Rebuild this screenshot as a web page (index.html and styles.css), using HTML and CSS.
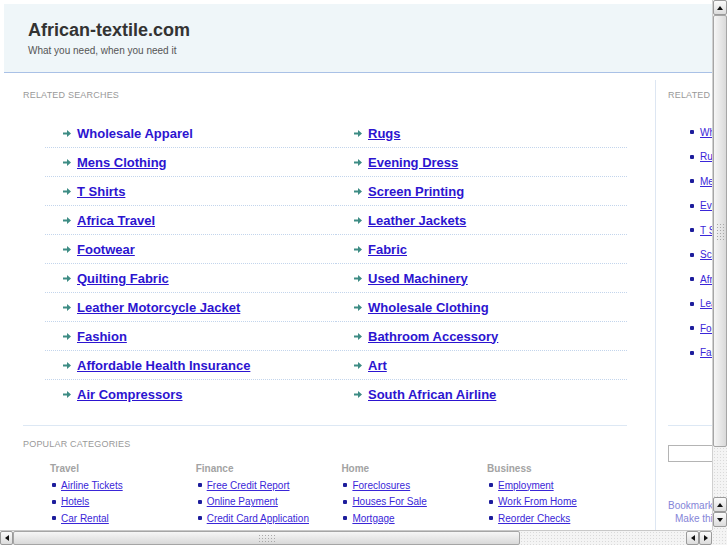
FILE: index.html
```html
<html>
  <head>
    <link rel="stylesheet" href="styles.css">
  </head>
  <body>
    <div class="screen">
      <div class="viewport">
        <div class="page">
          <div class="header">
            <h1 class="title">African-textile.com</h1>
            <p class="tagline">What you need, when you need it</p>
          </div>

          <div class="content">
            <!-- main column -->
            <div class="main">
              <h2 class="label">Related Searches</h2>
              <ul class="searches">
                <li><a class="plain" href="#">Wholesale Apparel</a></li>
                <li><a href="#">Rugs</a></li>
                <li><a href="#">Mens Clothing</a></li>
                <li><a href="#">Evening Dress</a></li>
                <li><a href="#">T Shirts</a></li>
                <li><a href="#">Screen Printing</a></li>
                <li><a href="#">Africa Travel</a></li>
                <li><a href="#">Leather Jackets</a></li>
                <li><a href="#">Footwear</a></li>
                <li><a href="#">Fabric</a></li>
                <li><a href="#">Quilting Fabric</a></li>
                <li><a href="#">Used Machinery</a></li>
                <li><a href="#">Leather Motorcycle Jacket</a></li>
                <li><a href="#">Wholesale Clothing</a></li>
                <li><a href="#">Fashion</a></li>
                <li><a href="#">Bathroom Accessory</a></li>
                <li><a href="#">Affordable Health Insurance</a></li>
                <li><a href="#">Art</a></li>
                <li><a href="#">Air Compressors</a></li>
                <li><a href="#">South African Airline</a></li>
              </ul>
              <hr class="rule">

              <h2 class="label">Popular Categories</h2>
              <div class="cats">
                <div class="cat">
                  <h3>Travel</h3>
                  <ul>
                    <li><a href="#">Airline Tickets</a></li>
                    <li><a href="#">Hotels</a></li>
                    <li><a href="#">Car Rental</a></li>
                  </ul>
                </div>
                <div class="cat">
                  <h3>Finance</h3>
                  <ul>
                    <li><a href="#">Free Credit Report</a></li>
                    <li><a href="#">Online Payment</a></li>
                    <li><a href="#">Credit Card Application</a></li>
                  </ul>
                </div>
                <div class="cat">
                  <h3>Home</h3>
                  <ul>
                    <li><a href="#">Foreclosures</a></li>
                    <li><a href="#">Houses For Sale</a></li>
                    <li><a href="#">Mortgage</a></li>
                  </ul>
                </div>
                <div class="cat">
                  <h3>Business</h3>
                  <ul>
                    <li><a href="#">Employment</a></li>
                    <li><a href="#">Work From Home</a></li>
                    <li><a href="#">Reorder Checks</a></li>
                  </ul>
                </div>
              </div>
            </div>

            <!-- right column -->
            <div class="side">
              <h2 class="label">Related Searches</h2>
              <ul class="side-list">
                <li><a href="#">Wholesale Apparel</a></li>
                <li><a href="#">Rugs</a></li>
                <li><a href="#">Mens Clothing</a></li>
                <li><a href="#">Evening Dress</a></li>
                <li><a href="#">T Shirts</a></li>
                <li><a href="#">Screen Printing</a></li>
                <li><a href="#">Africa Travel</a></li>
                <li><a href="#">Leather Jackets</a></li>
                <li><a href="#">Footwear</a></li>
                <li><a href="#">Fabric</a></li>
              </ul>
              <hr class="rule side-rule">
              <div class="search"><input type="text"></div>
              <p class="bookmark">Bookmark this page</p>
              <p class="bookmark make">Make this your homepage</p>
            </div>
          </div>
        </div>
      </div>

      <!-- window scrollbars -->
      <div class="vscroll">
        <div class="btn"><span class="tri up"></span></div>
        <div class="thumb v"><span class="grip"></span></div>
        <div class="track"></div>
        <div class="btn"><span class="tri up"></span></div>
        <div class="btn"><span class="tri down"></span></div>
        <div class="track tail"></div>
      </div>
      <div class="hscroll">
        <div class="btn"><span class="tri left"></span></div>
        <div class="thumb h"><span class="grip"></span></div>
        <div class="track"></div>
        <div class="btn"><span class="tri left"></span></div>
        <div class="btn"><span class="tri right"></span></div>
      </div>
      <div class="corner"></div>
    </div>
  </body>
</html>
```

FILE: styles.css
```css
* {
  margin: 0;
  padding: 0;
  border: 0;
  box-sizing: border-box;
}
li {
  list-style: none;
}
body {
  background-color: #fff;
  font-family: "Liberation Sans", Arial, sans-serif;
  color: #333;
}
.screen {
  display: grid;
  grid-template-columns: 712px 15px;
  grid-template-rows: 530px 15px;
  width: 727px;
  height: 545px;
  overflow: hidden;
}
.viewport {
  overflow: hidden;
}
.page {
  width: 960px;
  padding: 4px 0 0 4px;
}

/* header */
.header {
  height: 69px;
  background-color: #eff6f9;
  border-bottom: 1px solid #a9c1e6;
  padding: 15px 0 0 24px;
}
.title {
  font-size: 18px;
  font-weight: bold;
  line-height: 22px;
  color: #333;
}
.tagline {
  font-size: 10px;
  line-height: 14px;
  margin-top: 3px;
  color: #555;
}

/* columns */
.content {
  display: flex;
  margin-top: 7px;
}
.main {
  width: 652px;
  flex: none;
  border-right: 1px solid #dde6f2;
  padding: 9px 0 30px 19px;
}
.side {
  flex: none;
  width: 300px;
  padding: 9px 0 0 12px;
}
.label {
  font-size: 9px;
  font-weight: normal;
  line-height: 12px;
  letter-spacing: 0.2px;
  text-transform: uppercase;
  color: #999;
}

/* related searches */
.searches {
  display: grid;
  grid-template-columns: 291px 291px;
  width: 582px;
  margin: 18px 0 0 22px;
}
.searches li {
  display: flex;
  align-items: center;
  gap: 6px;
  height: 29px;
  padding-left: 18px;
  border-bottom: 1px dotted #c3d5ec;
}
.searches li:nth-last-child(-n+2) {
  border-bottom: 0;
}
.searches li::before {
  content: "";
  width: 8px;
  height: 7px;
  flex: none;
  background: url("data:image/svg+xml,%3Csvg xmlns='http://www.w3.org/2000/svg' width='8' height='7' viewBox='0 0 8 7'%3E%3Cpath d='M0 2.5h4V0l4 3.5-4 3.5V4.5H0z' fill='%233d8c84'/%3E%3C/svg%3E") no-repeat;
}
.searches a {
  font-size: 13px;
  font-weight: bold;
  color: #2c14d0;
  text-decoration: underline;
}
.searches a.plain {
  text-decoration: none;
}
.rule {
  width: 604px;
  height: 1px;
  background-color: #dde8f4;
  margin-top: 16px;
}
.main .label:nth-of-type(2) {
  margin-top: 12px;
}

/* popular categories */
.cats {
  display: grid;
  grid-template-columns: repeat(4, 145.7px);
  margin: 12px 0 0 27px;
}
.cat h3 {
  font-size: 10px;
  font-weight: bold;
  line-height: 14px;
  color: #a3a3a3;
  height: 15px;
}
.cat li,
.side-list li {
  display: flex;
  align-items: center;
  gap: 5px;
  font-size: 10px;
  height: 16.5px;
  padding-left: 2px;
}
.cat li::before,
.side-list li::before {
  content: "";
  width: 4px;
  height: 4px;
  border-radius: 1px;
  flex: none;
  background-color: #1d1d9c;
}
.cat a,
.side-list a {
  color: #3a26d8;
  text-decoration: underline;
}

/* right column */
.side-list {
  margin: 19px 0 0 20px;
}
.side-list li {
  height: 24.5px;
  gap: 6px;
}
.side-rule {
  width: 280px;
  margin-top: 60px;
}
.search {
  margin-top: 19px;
}
.search input {
  width: 200px;
  height: 17px;
  border: 1px solid #b4b4b4;
  background: #fff;
}
.bookmark {
  font-size: 10px;
  line-height: 13px;
  color: #8585d8;
  margin-top: 37px;
}
.bookmark.make {
  margin: 0 0 0 7px;
}

/* scrollbars */
.vscroll,
.hscroll {
  display: flex;
  background-color: #f2f2f2;
}
.vscroll {
  flex-direction: column;
  border-left: 1px solid #d0d0d0;
}
.hscroll {
  border-top: 1px solid #c8c8c8;
}
.btn {
  flex: none;
  width: 14px;
  height: 15px;
  display: flex;
  align-items: center;
  justify-content: center;
  background: linear-gradient(#fbfbfb, #dcdcdc);
  border: 1px solid #9a9a9a;
  border-radius: 2px;
}
.hscroll .btn {
  width: 13px;
  height: 14px;
}
.track {
  flex: 1;
  background-color: #f4f4f4;
  background-image: radial-gradient(#dadada 0.6px, transparent 0.8px);
  background-size: 3px 3px;
}
.vscroll .track.tail {
  flex: none;
  height: 3px;
}
.thumb {
  flex: none;
  display: flex;
  align-items: center;
  justify-content: center;
  border: 1px solid #a5a5a5;
  border-radius: 2px;
}
.thumb.v {
  height: 432px;
  background: linear-gradient(90deg, #f6f6f6, #d9d9d9);
}
.thumb.h {
  width: 507px;
  background: linear-gradient(#f6f6f6, #d9d9d9);
}
.grip {
  display: block;
  background-image: radial-gradient(#a8a8a8 0.6px, transparent 0.9px);
  background-size: 3px 3px;
}
.thumb.v .grip {
  width: 9px;
  height: 17px;
}
.thumb.h .grip {
  width: 17px;
  height: 9px;
}
.tri {
  width: 0;
  height: 0;
  border: 3.5px solid transparent;
}
.tri.up {
  border-bottom: 4px solid #111;
  border-top: 0;
}
.tri.down {
  border-top: 4px solid #111;
  border-bottom: 0;
}
.tri.left {
  border-right: 4px solid #111;
  border-left: 0;
}
.tri.right {
  border-left: 4px solid #111;
  border-right: 0;
}
.corner {
  background-color: #f4f4f4;
  background-image: radial-gradient(#dadada 0.6px, transparent 0.8px);
  background-size: 3px 3px;
}
```
